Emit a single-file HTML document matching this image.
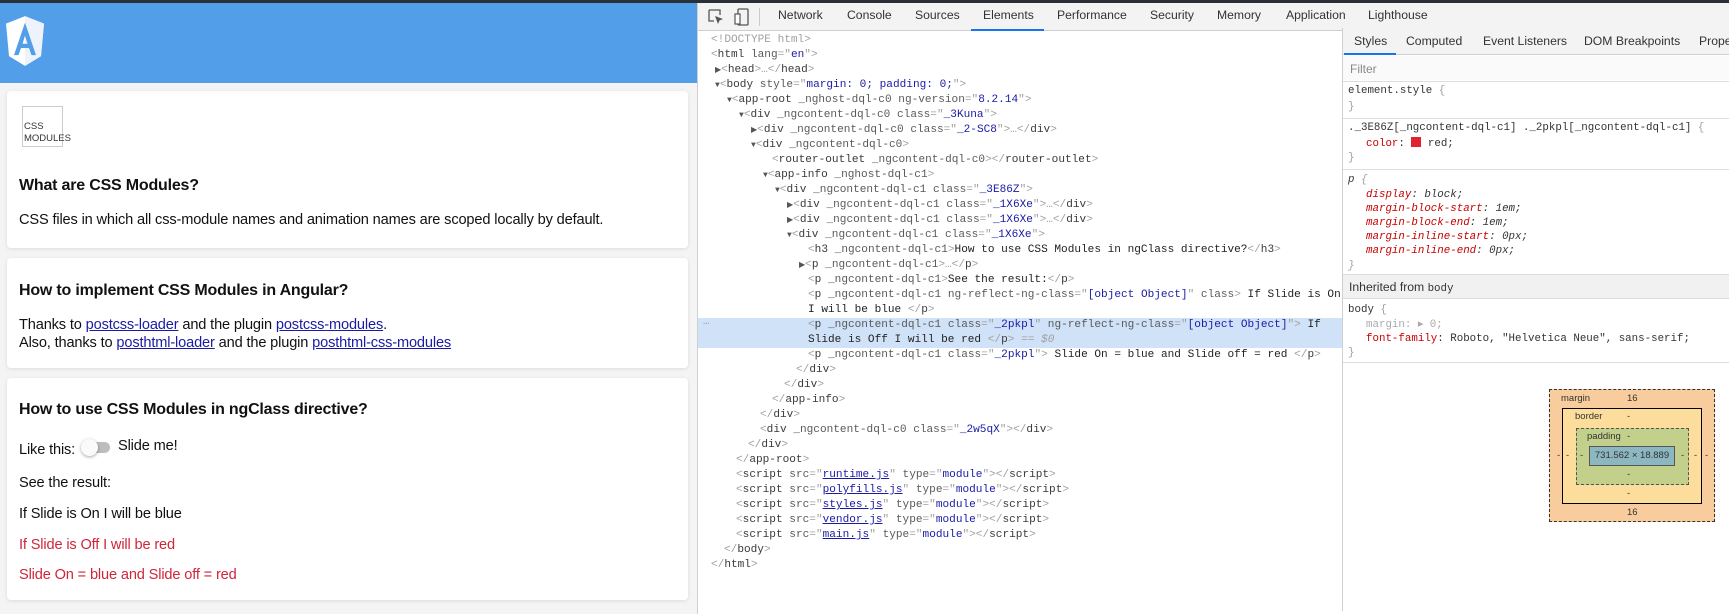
<!DOCTYPE html>
<html><head><meta charset="utf-8"><style>
*{margin:0;padding:0;box-sizing:border-box}
body{width:1729px;height:614px;overflow:hidden;position:relative;background:#fff;font-family:"Liberation Sans",sans-serif}
.a{position:absolute}
#topbar{left:0;top:0;width:1729px;height:3px;background:#2b2f36}
#page{left:0;top:3px;width:697px;height:611px;background:#f4f4f4;overflow:hidden}
#hdr{left:0;top:0;width:697px;height:80px;background:#529ee9}
.card{position:absolute;left:7px;width:681px;background:#fff;border-radius:4px;box-shadow:0 1px 4px rgba(0,0,0,.10)}
.h{position:absolute;left:12px;font-weight:bold;font-size:16px;letter-spacing:-0.2px;color:#111;white-space:nowrap}
.p{position:absolute;left:12px;font-size:14.6px;letter-spacing:-0.15px;color:#111;white-space:nowrap;line-height:18px}
.p a{color:#1a1aa6;text-decoration:underline}
.red{color:#d0253a}
#dev{left:697px;top:3px;width:1032px;height:611px;background:#fff;border-left:1px solid #cfcfcf}
#tabbar{left:0;top:0;width:1032px;height:28px;background:#f3f3f3;border-bottom:1px solid #cfcfcf}
.tab{position:absolute;top:5px;font-size:12.2px;color:#333;white-space:nowrap}
.l{position:absolute;white-space:pre;font-family:"Liberation Mono",monospace;font-size:11.1px;line-height:15px;height:15px;color:#333;margin-top:2px}
.g{color:#a0a0a0}.n{color:#3a3a3a}.an{color:#5a5a5a}.v{color:#1a1aa6}.c{color:#222}
.tri{color:#555;font-size:8px}
#sty{left:645px;top:28px;width:387px;height:583px;border-left:1px solid #cfcfcf;background:#fff}
.st{position:absolute;white-space:pre;font-family:"Liberation Mono",monospace;font-size:10.8px;line-height:14px;color:#333;margin-top:2px}
.pr{color:#c80000}
.hr{position:absolute;left:0;width:387px;height:1px;background:#ddd}
</style></head><body>
<div class="a" id="topbar"></div>
<div class="a" id="page">
 <div class="a" id="hdr">
  <svg class="a" style="left:5px;top:12px" width="40" height="52" viewBox="0 0 40 48" preserveAspectRatio="none">
   <path d="M20 1 L39 8 L36 38 L20 47 L4 38 L1 8 Z" fill="#fff"/>
   <path d="M20 1 L39 8 L36 38 L20 47 Z" fill="#eef3fb"/>
   <path d="M20 7 L9 37 H13.5 L16 30.5 H24 L26.5 37 H31 Z M17.5 26.5 L20 19 L22.5 26.5 Z" fill="#529ee9"/>
  </svg>
 </div>
 <div class="card" style="top:88px;height:157px">
  <div class="a" style="left:15px;top:15px;width:41px;height:41px;border:1px solid #ccc;font-size:9.5px;line-height:12px;color:#333;padding-top:14px;padding-left:1px;white-space:nowrap">CSS<br>MODULES</div>
  <div class="h" style="top:86px">What are CSS Modules?</div>
  <div class="p" style="top:120px">CSS files in which all css-module names and animation names are scoped locally by default.</div>
 </div>
 <div class="card" style="top:255px;height:110px">
  <div class="h" style="top:24px">How to implement CSS Modules in Angular?</div>
  <div class="p" style="top:58px">Thanks to <a>postcss-loader</a> and the plugin <a>postcss-modules</a>.</div>
  <div class="p" style="top:76px">Also, thanks to <a>posthtml-loader</a> and the plugin <a>posthtml-css-modules</a></div>
 </div>
 <div class="card" style="top:375px;height:222px">
  <div class="h" style="top:23px">How to use CSS Modules in ngClass directive?</div>
  <div class="p" style="top:63px">Like this:</div>
  <div class="a" style="left:81px;top:64px;width:22px;height:11px;border-radius:6px;background:#bdbdbd"></div>
  <div class="a" style="left:74px;top:61px;width:17px;height:17px;border-radius:50%;background:#fafafa;box-shadow:0 1px 3px rgba(0,0,0,.35)"></div>
  <div class="p" style="left:111px;top:59px">Slide me!</div>
  <div class="p" style="top:96px">See the result:</div>
  <div class="p" style="top:127px">If Slide is On I will be blue</div>
  <div class="p red" style="top:158px">If Slide is Off I will be red</div>
  <div class="p red" style="top:188px">Slide On = blue and Slide off = red</div>
 </div>
</div>
<div class="a" id="dev">
 <div class="a" id="tabbar">
  <svg class="a" style="left:10px;top:6px" width="16" height="16" viewBox="0 0 16 16"><path d="M1 1 H12 V6 M1 1 V12 H6" fill="none" stroke="#555" stroke-width="1.3"/><path d="M7 7 L15 10 L11.5 11.5 L10 15 Z" fill="#555"/></svg>
  <svg class="a" style="left:36px;top:5px" width="16" height="18" viewBox="0 0 16 18"><rect x="4" y="1" width="10" height="16" rx="1" fill="none" stroke="#555" stroke-width="1.3"/><rect x="1" y="6" width="5" height="10" fill="#fff" stroke="#555" stroke-width="1.2"/></svg>
  <div class="a" style="left:61px;top:5px;width:1px;height:18px;background:#ccc"></div>
  <div class="tab" style="left:80px">Network</div>
  <div class="tab" style="left:149px">Console</div>
  <div class="tab" style="left:217px">Sources</div>
  <div class="tab" style="left:285px">Elements</div>
  <div class="a" style="left:273px;top:26px;width:73px;height:2px;background:#1a73e8"></div>
  <div class="tab" style="left:359px">Performance</div>
  <div class="tab" style="left:452px">Security</div>
  <div class="tab" style="left:519px">Memory</div>
  <div class="tab" style="left:588px">Application</div>
  <div class="tab" style="left:670px">Lighthouse</div>
 </div>
 <div class="a" style="left:0;top:315px;width:645px;height:30px;background:#cfe2f8"></div>
 <div class="l g" style="left:5px;top:310px">…</div>
</div>
<div id="tree">
<div class="l" style="left:711px;top:31px"><span class="g">&lt;!DOCTYPE html&gt;</span></div>
<div class="l" style="left:711px;top:46px"><span class="g">&lt;</span><span class="n">html</span> <span class="an">lang</span><span class="g">="</span><span class="v">en</span><span class="g">"&gt;</span></div>
<div class="l" style="left:715px;top:61px"><span class="tri">▶</span><span class="g">&lt;</span><span class="n">head</span><span class="g">&gt;…&lt;/</span><span class="n">head</span><span class="g">&gt;</span></div>
<div class="l" style="left:715px;top:76px"><span class="tri">▼</span><span class="g">&lt;</span><span class="n">body</span> <span class="an">style</span><span class="g">="</span><span class="v">margin: 0; padding: 0;</span><span class="g">"&gt;</span></div>
<div class="l" style="left:727px;top:91px"><span class="tri">▼</span><span class="g">&lt;</span><span class="n">app-root</span> <span class="an">_nghost-dql-c0</span> <span class="an">ng-version</span><span class="g">="</span><span class="v">8.2.14</span><span class="g">"&gt;</span></div>
<div class="l" style="left:739px;top:106px"><span class="tri">▼</span><span class="g">&lt;</span><span class="n">div</span> <span class="an">_ngcontent-dql-c0</span> <span class="an">class</span><span class="g">="</span><span class="v">_3Kuna</span><span class="g">"&gt;</span></div>
<div class="l" style="left:751px;top:121px"><span class="tri">▶</span><span class="g">&lt;</span><span class="n">div</span> <span class="an">_ngcontent-dql-c0</span> <span class="an">class</span><span class="g">="</span><span class="v">_2-SC8</span><span class="g">"&gt;…&lt;/</span><span class="n">div</span><span class="g">&gt;</span></div>
<div class="l" style="left:751px;top:136px"><span class="tri">▼</span><span class="g">&lt;</span><span class="n">div</span> <span class="an">_ngcontent-dql-c0</span><span class="g">&gt;</span></div>
<div class="l" style="left:772px;top:151px"><span class="g">&lt;</span><span class="n">router-outlet</span> <span class="an">_ngcontent-dql-c0</span><span class="g">&gt;&lt;/</span><span class="n">router-outlet</span><span class="g">&gt;</span></div>
<div class="l" style="left:763px;top:166px"><span class="tri">▼</span><span class="g">&lt;</span><span class="n">app-info</span> <span class="an">_nghost-dql-c1</span><span class="g">&gt;</span></div>
<div class="l" style="left:775px;top:181px"><span class="tri">▼</span><span class="g">&lt;</span><span class="n">div</span> <span class="an">_ngcontent-dql-c1</span> <span class="an">class</span><span class="g">="</span><span class="v">_3E86Z</span><span class="g">"&gt;</span></div>
<div class="l" style="left:787px;top:196px"><span class="tri">▶</span><span class="g">&lt;</span><span class="n">div</span> <span class="an">_ngcontent-dql-c1</span> <span class="an">class</span><span class="g">="</span><span class="v">_1X6Xe</span><span class="g">"&gt;…&lt;/</span><span class="n">div</span><span class="g">&gt;</span></div>
<div class="l" style="left:787px;top:211px"><span class="tri">▶</span><span class="g">&lt;</span><span class="n">div</span> <span class="an">_ngcontent-dql-c1</span> <span class="an">class</span><span class="g">="</span><span class="v">_1X6Xe</span><span class="g">"&gt;…&lt;/</span><span class="n">div</span><span class="g">&gt;</span></div>
<div class="l" style="left:787px;top:226px"><span class="tri">▼</span><span class="g">&lt;</span><span class="n">div</span> <span class="an">_ngcontent-dql-c1</span> <span class="an">class</span><span class="g">="</span><span class="v">_1X6Xe</span><span class="g">"&gt;</span></div>
<div class="l" style="left:808px;top:241px"><span class="g">&lt;</span><span class="n">h3</span> <span class="an">_ngcontent-dql-c1</span><span class="g">&gt;</span><span class="c">How to use CSS Modules in ngClass directive?</span><span class="g">&lt;/</span><span class="n">h3</span><span class="g">&gt;</span></div>
<div class="l" style="left:799px;top:256px"><span class="tri">▶</span><span class="g">&lt;</span><span class="n">p</span> <span class="an">_ngcontent-dql-c1</span><span class="g">&gt;…&lt;/</span><span class="n">p</span><span class="g">&gt;</span></div>
<div class="l" style="left:808px;top:271px"><span class="g">&lt;</span><span class="n">p</span> <span class="an">_ngcontent-dql-c1</span><span class="g">&gt;</span><span class="c">See the result:</span><span class="g">&lt;/</span><span class="n">p</span><span class="g">&gt;</span></div>
<div class="l" style="left:808px;top:286px"><span class="g">&lt;</span><span class="n">p</span> <span class="an">_ngcontent-dql-c1</span> <span class="an">ng-reflect-ng-class</span><span class="g">="</span><span class="v">[object Object]</span><span class="g">"</span> <span class="an">class</span><span class="g">&gt;</span><span class="c"> If Slide is On</span></div>
<div class="l" style="left:808px;top:301px"><span class="c">I will be blue </span><span class="g">&lt;/</span><span class="n">p</span><span class="g">&gt;</span></div>
<div class="l" style="left:808px;top:316px"><span class="g">&lt;</span><span class="n">p</span> <span class="an">_ngcontent-dql-c1</span> <span class="an">class</span><span class="g">="</span><span class="v">_2pkpl</span><span class="g">"</span> <span class="an">ng-reflect-ng-class</span><span class="g">="</span><span class="v">[object Object]</span><span class="g">"&gt;</span><span class="c"> If</span></div>
<div class="l" style="left:808px;top:331px"><span class="c">Slide is Off I will be red </span><span class="g">&lt;/</span><span class="n">p</span><span class="g">&gt; == <i>$0</i></span></div>
<div class="l" style="left:808px;top:346px"><span class="g">&lt;</span><span class="n">p</span> <span class="an">_ngcontent-dql-c1</span> <span class="an">class</span><span class="g">="</span><span class="v">_2pkpl</span><span class="g">"&gt;</span><span class="c"> Slide On = blue and Slide off = red </span><span class="g">&lt;/</span><span class="n">p</span><span class="g">&gt;</span></div>
<div class="l" style="left:796px;top:361px"><span class="g">&lt;/</span><span class="n">div</span><span class="g">&gt;</span></div>
<div class="l" style="left:784px;top:376px"><span class="g">&lt;/</span><span class="n">div</span><span class="g">&gt;</span></div>
<div class="l" style="left:772px;top:391px"><span class="g">&lt;/</span><span class="n">app-info</span><span class="g">&gt;</span></div>
<div class="l" style="left:760px;top:406px"><span class="g">&lt;/</span><span class="n">div</span><span class="g">&gt;</span></div>
<div class="l" style="left:760px;top:421px"><span class="g">&lt;</span><span class="n">div</span> <span class="an">_ngcontent-dql-c0</span> <span class="an">class</span><span class="g">="</span><span class="v">_2w5qX</span><span class="g">"&gt;&lt;/</span><span class="n">div</span><span class="g">&gt;</span></div>
<div class="l" style="left:748px;top:436px"><span class="g">&lt;/</span><span class="n">div</span><span class="g">&gt;</span></div>
<div class="l" style="left:736px;top:451px"><span class="g">&lt;/</span><span class="n">app-root</span><span class="g">&gt;</span></div>
<div class="l" style="left:736px;top:466px"><span class="g">&lt;</span><span class="n">script</span> <span class="an">src</span><span class="g">="</span><span class="v"><u>runtime.js</u></span><span class="g">"</span> <span class="an">type</span><span class="g">="</span><span class="v">module</span><span class="g">"&gt;&lt;/</span><span class="n">script</span><span class="g">&gt;</span></div>
<div class="l" style="left:736px;top:481px"><span class="g">&lt;</span><span class="n">script</span> <span class="an">src</span><span class="g">="</span><span class="v"><u>polyfills.js</u></span><span class="g">"</span> <span class="an">type</span><span class="g">="</span><span class="v">module</span><span class="g">"&gt;&lt;/</span><span class="n">script</span><span class="g">&gt;</span></div>
<div class="l" style="left:736px;top:496px"><span class="g">&lt;</span><span class="n">script</span> <span class="an">src</span><span class="g">="</span><span class="v"><u>styles.js</u></span><span class="g">"</span> <span class="an">type</span><span class="g">="</span><span class="v">module</span><span class="g">"&gt;&lt;/</span><span class="n">script</span><span class="g">&gt;</span></div>
<div class="l" style="left:736px;top:511px"><span class="g">&lt;</span><span class="n">script</span> <span class="an">src</span><span class="g">="</span><span class="v"><u>vendor.js</u></span><span class="g">"</span> <span class="an">type</span><span class="g">="</span><span class="v">module</span><span class="g">"&gt;&lt;/</span><span class="n">script</span><span class="g">&gt;</span></div>
<div class="l" style="left:736px;top:526px"><span class="g">&lt;</span><span class="n">script</span> <span class="an">src</span><span class="g">="</span><span class="v"><u>main.js</u></span><span class="g">"</span> <span class="an">type</span><span class="g">="</span><span class="v">module</span><span class="g">"&gt;&lt;/</span><span class="n">script</span><span class="g">&gt;</span></div>
<div class="l" style="left:724px;top:541px"><span class="g">&lt;/</span><span class="n">body</span><span class="g">&gt;</span></div>
<div class="l" style="left:711px;top:556px"><span class="g">&lt;/</span><span class="n">html</span><span class="g">&gt;</span></div>
</div>
<div class="a" id="sty" style="left:1342px">
 <div class="a" style="left:0;top:0;width:387px;height:27px;background:#f3f3f3;border-bottom:1px solid #cfcfcf"></div>
 <div class="tab" style="left:11px;top:6px">Styles</div>
 <div class="a" style="left:1px;top:25px;width:52px;height:2px;background:#1a73e8"></div>
 <div class="tab" style="left:63px;top:6px">Computed</div>
 <div class="tab" style="left:140px;top:6px">Event Listeners</div>
 <div class="tab" style="left:241px;top:6px">DOM Breakpoints</div>
 <div class="tab" style="left:356px;top:6px">Properties</div>
 <div class="a" style="left:0;top:28px;width:387px;height:24px;background:#fafafa"></div>
 <div class="a" style="left:7px;top:34px;font-size:12px;color:#888">Filter</div>
 <div class="hr" style="top:53px"></div>
 <div class="st" style="left:5px;top:54px">element.style <span class="g">{</span></div>
 <div class="st" style="left:5px;top:70px"><span class="g">}</span></div>
 <div class="hr" style="top:90px"></div>
 <div class="st" style="left:5px;top:91px">._3E86Z[_ngcontent-dql-c1] ._2pkpl[_ngcontent-dql-c1] <span class="g">{</span></div>
 <div class="st" style="left:23px;top:107px"><span class="pr">color</span>: <span style="display:inline-block;width:10px;height:10px;background:#e0232e;vertical-align:-1px"></span> red;</div>
 <div class="st" style="left:5px;top:121px"><span class="g">}</span></div>
 <div class="hr" style="top:141px"></div>
 <div class="st" style="left:5px;top:143px;font-style:italic">p <span class="g">{</span></div>
 <div class="st" style="left:23px;top:158px;font-style:italic"><span class="pr">display</span>: block;</div>
 <div class="st" style="left:23px;top:172px;font-style:italic"><span class="pr">margin-block-start</span>: 1em;</div>
 <div class="st" style="left:23px;top:186px;font-style:italic"><span class="pr">margin-block-end</span>: 1em;</div>
 <div class="st" style="left:23px;top:200px;font-style:italic"><span class="pr">margin-inline-start</span>: 0px;</div>
 <div class="st" style="left:23px;top:214px;font-style:italic"><span class="pr">margin-inline-end</span>: 0px;</div>
 <div class="st" style="left:5px;top:229px;font-style:italic"><span class="g">}</span></div>
 <div class="a" style="left:0;top:246px;width:387px;height:25px;background:#f1f1f1;border-top:1px solid #ddd;border-bottom:1px solid #ddd"></div>
 <div class="a" style="left:6px;top:252px;font-size:12.2px;color:#333">Inherited from <span style="font-family:'Liberation Mono',monospace;font-size:10.8px">body</span></div>
 <div class="st" style="left:5px;top:273px">body <span class="g">{</span></div>
 <div class="st" style="left:23px;top:288px;color:#aaa">margin: ▸ 0;</div>
 <div class="st" style="left:23px;top:302px"><span class="pr">font-family</span>: Roboto, "Helvetica Neue", sans-serif;</div>
 <div class="st" style="left:5px;top:316px"><span class="g">}</span></div>
 <div class="hr" style="top:334px"></div>
 <div class="a" style="left:206px;top:361px;width:166px;height:133px;background:#f9cc9d;border:1px dashed #333;font-size:9.5px;color:#333">
  <div class="a" style="left:11px;top:3px">margin</div><div class="a" style="left:77px;top:3px">16</div>
  <div class="a" style="left:77px;top:117px">16</div>
  <div class="a" style="left:7px;top:60px">-</div><div class="a" style="left:155px;top:60px">-</div>
  <div class="a" style="left:12px;top:18px;width:140px;height:96px;background:#fddd9b;border:1px solid #000">
   <div class="a" style="left:12px;top:2px">border</div><div class="a" style="left:64px;top:2px">-</div>
   <div class="a" style="left:64px;top:79px">-</div>
   <div class="a" style="left:3px;top:41px">-</div><div class="a" style="left:131px;top:41px">-</div>
   <div class="a" style="left:13px;top:19px;width:113px;height:57px;background:#c3d08b;border:1px dashed #555">
    <div class="a" style="left:10px;top:2px">padding</div><div class="a" style="left:50px;top:2px">-</div>
    <div class="a" style="left:50px;top:40px">-</div>
    <div class="a" style="left:3px;top:21px">-</div><div class="a" style="left:104px;top:21px">-</div>
    <div class="a" style="left:12px;top:17px;width:86px;height:20px;background:#8cb6c0;border:1px solid #555;text-align:center;line-height:18px;color:#333">731.562 × 18.889</div>
   </div>
  </div>
 </div>
</div>
</body></html>
